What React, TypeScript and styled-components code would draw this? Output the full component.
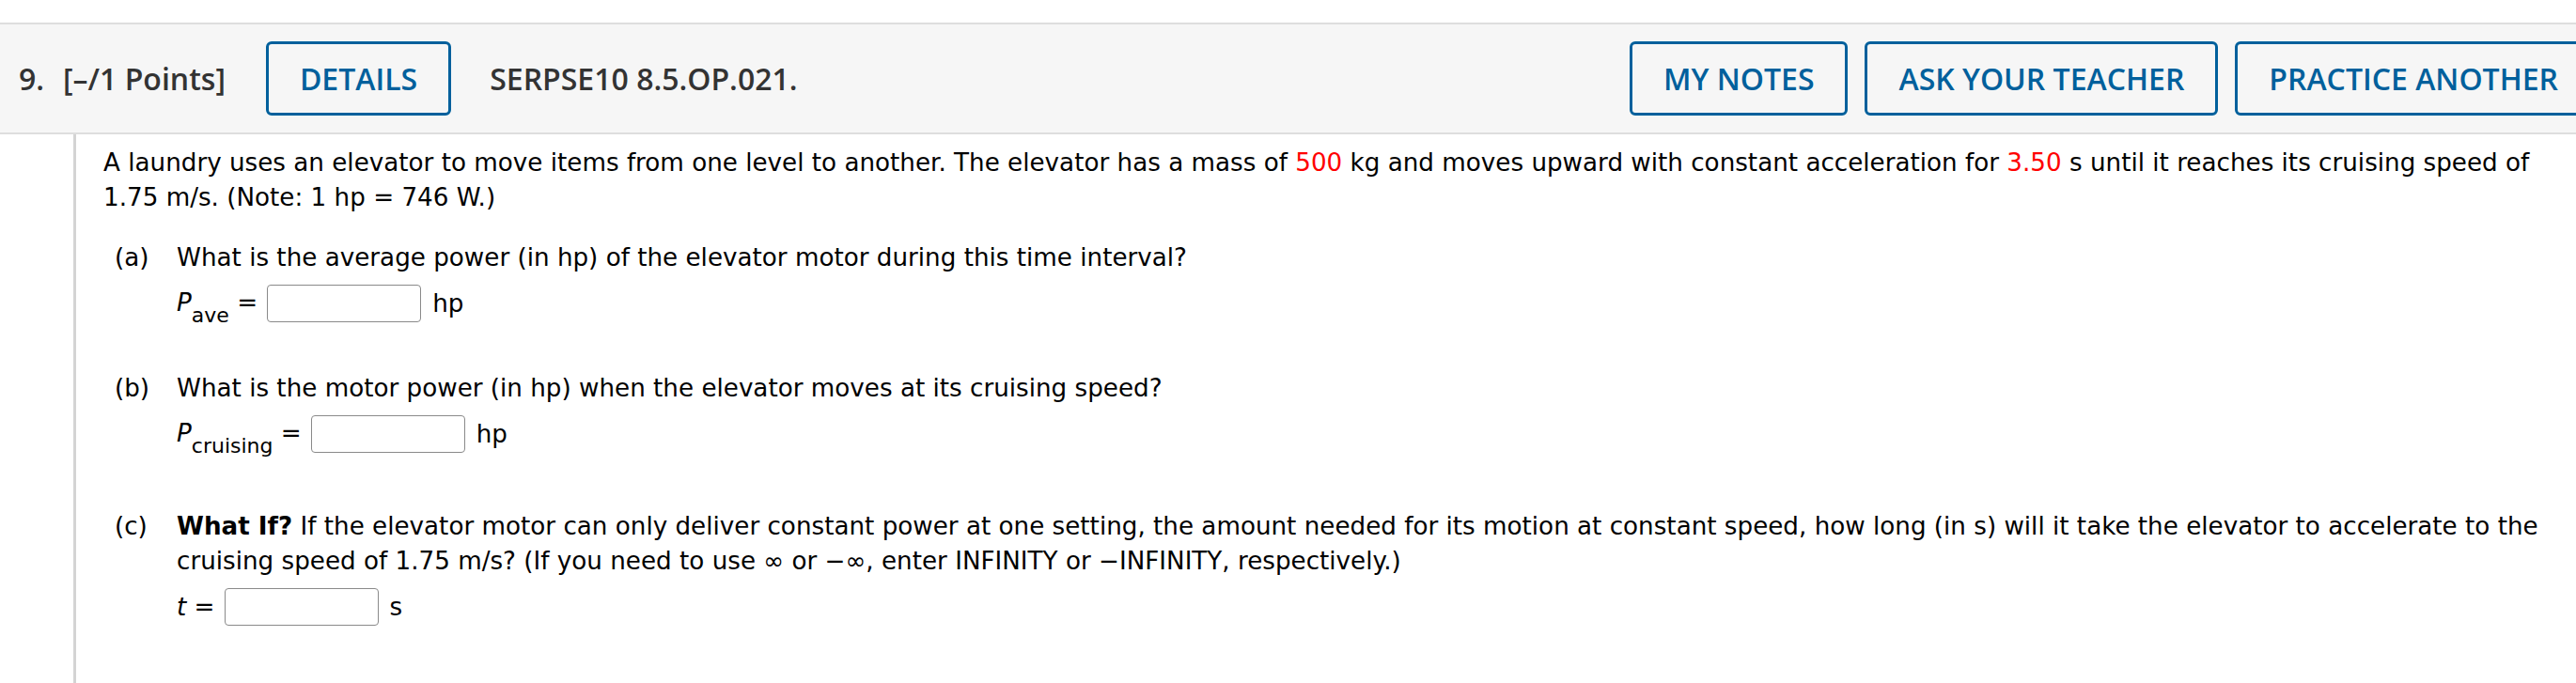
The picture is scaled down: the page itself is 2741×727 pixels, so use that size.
import * as React from 'react'
import styled, { createGlobalStyle } from 'styled-components'

const GlobalStyle = createGlobalStyle`
  body {
    margin: 0;
    background: #fff;
    overflow: hidden;
  }
`

const Page = styled.div`
  padding-top: 24px;
  font-family: 'DejaVu Sans', Verdana, sans-serif;
  color: #000;
`

const QuestionHeader = styled.div`
  box-sizing: border-box;
  width: 2778px;
  height: 119px;
  display: flex;
  align-items: center;
  padding: 0 20px;
  background: #f6f6f6;
  border-top: 2px solid #dedede;
  border-bottom: 2px solid #dedede;
  font-family: 'Open Sans', 'Liberation Sans', sans-serif;
  font-weight: 600;
  font-size: 32px;
  color: #333;
`

const HeaderText = styled.span<{ $gap: number }>`
  margin-left: ${p => p.$gap}px;
  white-space: nowrap;
`

const ActionButton = styled.button<{ $gap?: number }>`
  box-sizing: border-box;
  height: 79px;
  margin-left: ${p => p.$gap ?? 0}px;
  padding: 0 33px;
  border: 3px solid #00609c;
  border-radius: 6px;
  background: transparent;
  color: #00609c;
  font-family: 'Open Sans', 'Liberation Sans', sans-serif;
  font-weight: 600;
  font-size: 32px;
  white-space: nowrap;
`

const RightActions = styled.div`
  display: flex;
  gap: 18px;
  margin-left: auto;
`

const Content = styled.div`
  box-sizing: border-box;
  width: 2652px;
  min-height: calc(100vh - 143px);
  margin-left: 78px;
  padding: 12px 0 0 29px;
  border-left: 3px solid #d4d4d4;
  font-size: 26.2px;
  line-height: 37px;
`

const Intro = styled.p`
  margin: 0;
`

const Red = styled.span`
  color: #f00;
`

const Part = styled.div<{ $top: number }>`
  display: grid;
  grid-template-columns: 66px 1fr;
  margin: ${p => p.$top}px 0 0 12px;
`

const Question = styled.div``

const AnswerRow = styled.div`
  display: flex;
  align-items: center;
  margin-top: 10px;
  height: 40px;
`

const Label = styled.span`
  white-space: pre;
`

const Var = styled.i``

const Sub = styled.span`
  position: relative;
  top: 12px;
  font-size: 22px;
`

const AnswerBox = styled.input`
  box-sizing: border-box;
  width: 164px;
  height: 40px;
  margin: 0 12px 0 10px;
  border: 1px solid #8a8a8a;
  border-radius: 4px;
  background: #fff;
`

export default function App() {
  return (
    <Page>
      <GlobalStyle />
      <QuestionHeader>
        <span>9.</span>
        <HeaderText $gap={20}>[–/1 Points]</HeaderText>
        <ActionButton $gap={43}>DETAILS</ActionButton>
        <HeaderText $gap={41}>SERPSE10 8.5.OP.021.</HeaderText>
        <RightActions>
          <ActionButton>MY NOTES</ActionButton>
          <ActionButton>ASK YOUR TEACHER</ActionButton>
          <ActionButton>PRACTICE ANOTHER</ActionButton>
        </RightActions>
      </QuestionHeader>
      <Content>
        <Intro>
          A laundry uses an elevator to move items from one level to another. The elevator has a mass of{' '}
          <Red>500</Red> kg and moves upward with constant acceleration for <Red>3.50</Red> s until it
          reaches its cruising speed of 1.75 m/s. (Note: 1 hp = 746 W.)
        </Intro>
        <Part $top={27}>
          <span>(a)</span>
          <div>
            <Question>What is the average power (in hp) of the elevator motor during this time interval?</Question>
            <AnswerRow>
              <Label>
                <Var>P</Var>
                <Sub>ave</Sub> =
              </Label>
              <AnswerBox />
              <span>hp</span>
            </AnswerRow>
          </div>
        </Part>
        <Part $top={52}>
          <span>(b)</span>
          <div>
            <Question>What is the motor power (in hp) when the elevator moves at its cruising speed?</Question>
            <AnswerRow>
              <Label>
                <Var>P</Var>
                <Sub>cruising</Sub> =
              </Label>
              <AnswerBox />
              <span>hp</span>
            </AnswerRow>
          </div>
        </Part>
        <Part $top={60}>
          <span>(c)</span>
          <div>
            <Question>
              <b>What If?</b> If the elevator motor can only deliver constant power at one setting, the amount
              needed for its motion at constant speed, how long (in s) will it take the elevator to accelerate to
              the cruising speed of 1.75 m/s? (If you need to use ∞ or −∞, enter INFINITY or −INFINITY,
              respectively.)
            </Question>
            <AnswerRow>
              <Label>
                <Var>t</Var> =
              </Label>
              <AnswerBox />
              <span>s</span>
            </AnswerRow>
          </div>
        </Part>
      </Content>
    </Page>
  )
}
